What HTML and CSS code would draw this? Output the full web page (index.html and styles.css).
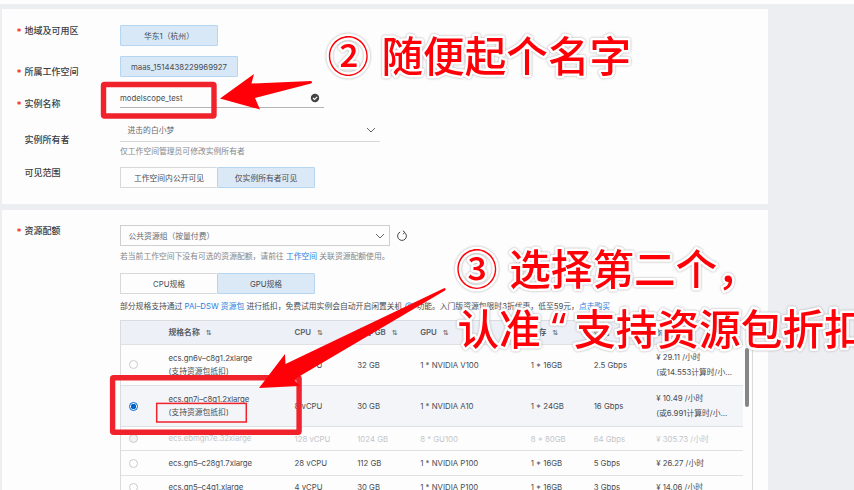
FILE: index.html
```html
<!DOCTYPE html>
<html lang="zh-CN">
<head>
<meta charset="utf-8">
<title>创建实例</title>
<link rel="stylesheet" href="styles.css">
</head>
<body>
<main class="page">
  <section class="card basic">
    <div class="row region">
      <label class="label required">地域及可用区</label>
      <div class="control"><button class="chip">华东1（杭州）</button></div>
    </div>
    <div class="row workspace">
      <label class="label required">所属工作空间</label>
      <div class="control"><button class="chip wide">maas_1514438229969927</button></div>
    </div>
    <div class="row name">
      <label class="label required">实例名称</label>
      <div class="control"><div class="input"><span class="value">modelscope_test</span>
        <svg class="ok" viewBox="0 0 10 10"><circle cx="5" cy="5" r="4.2" fill="#444"/><path d="M3 5l1.5 1.5L7.2 3.8" fill="none" stroke="#fff" stroke-width="1.1"/></svg></div></div>
    </div>
    <div class="row owner">
      <label class="label">实例所有者</label>
      <div class="control">
        <div class="line-select"><span>进击的白小梦</span><svg class="chev" viewBox="0 0 10 6"><path d="M1 1l4 4 4-4"/></svg></div>
        <p class="hint">仅工作空间管理员可修改实例所有者</p>
      </div>
    </div>
    <div class="row visible">
      <label class="label">可见范围</label>
      <div class="control tabs"><button class="tab">工作空间内公开可见</button><button class="tab active">仅实例所有者可见</button></div>
    </div>
  </section>

  <section class="card quota">
    <div class="row">
      <label class="label required">资源配额</label>
      <div class="control">
        <div class="select-line">
          <div class="select"><span>公共资源组（按量付费）</span><svg class="chev" viewBox="0 0 10 6"><path d="M1 1l4 4 4-4"/></svg></div>
          <svg class="reload" viewBox="0 0 12 12"><path d="M4.200 2A4.400 4.400 0 1 0 8.200 2.200M6.800 .8L8.800 2.300L7.200 4.200"/></svg>
        </div>
        <p class="hint quota-hint">若当前工作空间下没有可选的资源配额，请前往 <a>工作空间</a> 关联资源配额使用。</p>
        <div class="tabs"><button class="tab">CPU规格</button><button class="tab active">GPU规格</button></div>
        <p class="note"><span class="note-start">部分规格支持通过 <a>PAI–DSW 资源包</a> 进行抵扣，免费试用实例会自动开启闲置关机</span><svg class="help" viewBox="0 0 8 8"><circle cx="4" cy="4" r="3.3"/><path d="M3 3.2q1-1.4 2 0q0 .6-1 1v.6M4 5.5v.6"/></svg><span class="note-mid">功能。入门版资源包限时3折优惠，低至59元，</span><a>点击购买</a></p>
        <div class="table-box">
          <div class="table">
            <div class="tr head"><span></span><span>规格名称<i class="sort">⇅</i></span><span>CPU<i class="sort">⇅</i></span><span>内存 GB<i class="sort">⇅</i></span><span>GPU<i class="sort">⇅</i></span><span>显存<i class="sort">⇅</i></span><span>带宽<i class="sort">⇅</i></span><span>价格<i class="sort">⇅</i></span></div>
            <div class="tr tall"><span><b class="radio"></b></span><span class="spec">ecs.gn6v–c8g1.2xlarge<br><em>(支持资源包抵扣)</em></span><span>8 vCPU</span><span>32 GB</span><span>1 * NVIDIA V100</span><span>1 * 16GB</span><span>2.5 Gbps</span><span class="price">¥ 29.11 /小时<br>(或14.553计算时/小...</span></div>
            <div class="tr tall picked"><span><b class="radio on"></b></span><span class="spec">ecs.gn7i–c8g1.2xlarge<br><em>(支持资源包抵扣)</em></span><span>8 vCPU</span><span>30 GB</span><span>1 * NVIDIA A10</span><span>1 * 24GB</span><span>16 Gbps</span><span class="price">¥ 10.49 /小时<br>(或6.991计算时/小...</span></div>
            <div class="tr off"><span><b class="radio"></b></span><span class="spec">ecs.ebmgn7e.32xlarge</span><span>128 vCPU</span><span>1024 GB</span><span>8 * GU100</span><span>8 * 80GB</span><span>64 Gbps</span><span>¥ 305.73 /小时</span></div>
            <div class="tr"><span><b class="radio"></b></span><span class="spec">ecs.gn5–c28g1.7xlarge</span><span>28 vCPU</span><span>112 GB</span><span>1 * NVIDIA P100</span><span>1 * 16GB</span><span>5 Gbps</span><span>¥ 26.27 /小时</span></div>
            <div class="tr"><span><b class="radio"></b></span><span class="spec">ecs.gn5–c4g1.xlarge</span><span>4 vCPU</span><span>30 GB</span><span>1 * NVIDIA P100</span><span>1 * 16GB</span><span>3 Gbps</span><span>¥ 14.06 /小时</span></div>
          </div>
          <div class="scroll"><div class="thumb"></div></div>
        </div>
      </div>
    </div>
  </section>
</main>

<svg class="notes" viewBox="0 0 854 490" width="854" height="490">
  <g fill="none" stroke="#f0222b">
    <rect x="103.5" y="84.5" width="110.500" height="31.500" rx="1" stroke-width="5.4"/>
    <rect x="112.600" y="377.700" width="186.500" height="54.600" rx="1" stroke-width="5.400"/>
    <rect x="156.700" y="403.400" width="89.600" height="18.600" stroke-width="1.500"/>
  </g>
  <g fill="#ff0008">
    <path d="M220 98.500L254 74L251.500 83.500L311 81Q313 82 311 83.500L255 98L260 109.500Z"/>
    <path d="M259 388L285 354L285.500 364L444.500 288Q446.500 289 445 290.500L294 379.500L299.500 386Z"/>
  </g>
  <g class="callout">
    <text y="72" x="327.500 370 381.500 423.100 464.700 506.300 547.900 589.500">② 随便起个名字</text>
    <text y="284.500" x="456 498 509.200 550.800 592.400 634 675.600 717.200">③ 选择第二个，</text>
    <text y="344.500" x="457.500 499.100">认准</text>
    <text y="342.500" x="551.500" class="quote">“</text>
    <text y="344.500" x="574 615.700 657.400 699.100 740.800 782.500 824.200">支持资源包折扣</text>
  </g>
</svg>
</body>
</html>
```

FILE: styles.css
```css
* { box-sizing: border-box; }
body {
  margin: 0;
  width: 854px;
  height: 490px;
  overflow: hidden;
  background: #edeef2;
  color: #4a4d52;
  font: 7.8px/12px Inter, "Noto Sans CJK SC", sans-serif;
}
p { margin: 0; }
a { color: #2b7de0; }
.page {
  height: 490px;
  overflow: hidden;
  border-top: 4px solid #fdfdfd;
  padding: 5px 86px 0 1.500px;
}
.card { background: #fdfdfd; }
.basic { height: 195px; padding-top: 16px; margin-bottom: 6px; }
.quota { height: 290px; padding-top: 15px; }
.row { display: grid; grid-template-columns: 118.500px 1fr; }
.region { height: 31px; }
.workspace { height: 31px; }
.name { height: 36px; }
.owner { height: 44px; }
.label {
  padding-left: 23px;
  font-size: 9px;
  font-weight: 500;
  color: #3a3d42;
  position: relative;
}
.required::before {
  content: "*";
  position: absolute;
  left: 15px;
  top: 1px;
  color: #f5222d;
  font-size: 10px;
}
.workspace .label { margin-top: 10px; }
.name .label { margin-top: 10.500px; }
.owner .label { margin-top: 11px; }
.chip, .tab {
  display: block;
  height: 21px;
  padding: 0;
  border: 1px solid #b5d5f0;
  border-radius: 1px;
  background: #d8e8f7;
  color: #4a4d52;
  font: inherit;
  width: 98px;
}
.chip.wide { width: 118px; }
.input {
  width: 204px;
  height: 21px;
  border-bottom: 1px solid #b3b4b6;
  display: flex;
  justify-content: space-between;
  align-items: center;
  padding: 1px 4px 0 0;
}
.ok { width: 10px; height: 10px; }
.line-select {
  width: 260px;
  height: 19px;
  border-bottom: 1px solid #d6d7d9;
  display: flex;
  justify-content: space-between;
  align-items: center;
  padding: 0 4px 4px 7.500px;
  color: #66696e;
}
.chev { width: 10px; height: 6px; fill: none; stroke: #666; stroke-width: 1; }
.hint { color: #85888c; padding-top: 2.500px; white-space: nowrap; }
.tabs { display: flex; }
.tab { background: #fdfdfd; border-color: #d6d8da; border-right: 0; width: 97px; }
.tab.active { background: #dbe8f6; border: 1px solid #b5d5f0; width: 98px; }
.select-line { display: flex; align-items: center; gap: 6px; }
.select {
  width: 269.500px;
  height: 21px;
  border: 1px solid #cdcfd2;
  display: flex;
  justify-content: space-between;
  align-items: center;
  padding: 0 4px 0 7.500px;
  color: #66696e;
}
.reload { width: 12px; height: 12px; fill: none; stroke: #444; stroke-width: 1; }
.quota-hint { padding-top: 4px; height: 27px; }
.note { display: flex; align-items: center; height: 25.500px; padding-bottom: 1px; white-space: nowrap; }
.help { width: 8px; height: 8px; margin: 0 3px; fill: none; stroke: #2b7de0; stroke-width: .8; }
.table-box {
  width: 633px;
  height: 190px;
  display: flex;
  border: 1px solid #d9dbde;
  overflow: hidden;
}
.table { width: 622px; }
.tr {
  display: grid;
  grid-template-columns: 47.500px 126px 62.700px 63px 110.500px 63px 62.500px 1fr;
  align-items: center;
  height: 24.200px;
  border-bottom: 1px solid #dfe1e4;
  white-space: nowrap;
}
.head { background: #edf0f6; font-weight: 600; color: #5a5d62; }
.sort { font: 7px "DejaVu Sans", sans-serif; margin-left: 6px; }
.tall { height: 41.300px; }
.picked { background: #f4f5f8; }
.off { color: #c4c6c9; }
.spec { line-height: 13px; letter-spacing: -.05px; }
.spec em { font-style: normal; letter-spacing: 0; }
.price { line-height: 15px; }
.radio {
  display: block;
  width: 9px;
  height: 9px;
  margin-left: 8px;
  border: 1px solid #c9cbce;
  border-radius: 50%;
  background: #fff;
}
.off .radio { background: #f2f2f3; }
.radio.on { border-color: #0064c8; background: radial-gradient(#0064c8 0 2.500px, #fff 3px); }
.scroll { flex: 1; padding: 27.500px 0 0 2px; }
.thumb { width: 4px; height: 59px; border-radius: 2px; background: #858585; }
.notes { position: absolute; left: 0; top: 0; pointer-events: none; }
.callout {
  font: 500 41.600px "Noto Sans CJK SC", sans-serif;
  fill: #ff0008;
  stroke: #fff;
  stroke-width: 5px;
  stroke-linejoin: round;
  paint-order: stroke;
  filter: drop-shadow(0 0 1px #aaa);
}
.quote { font-family: "Open Sans", sans-serif; font-weight: 500; }
```
